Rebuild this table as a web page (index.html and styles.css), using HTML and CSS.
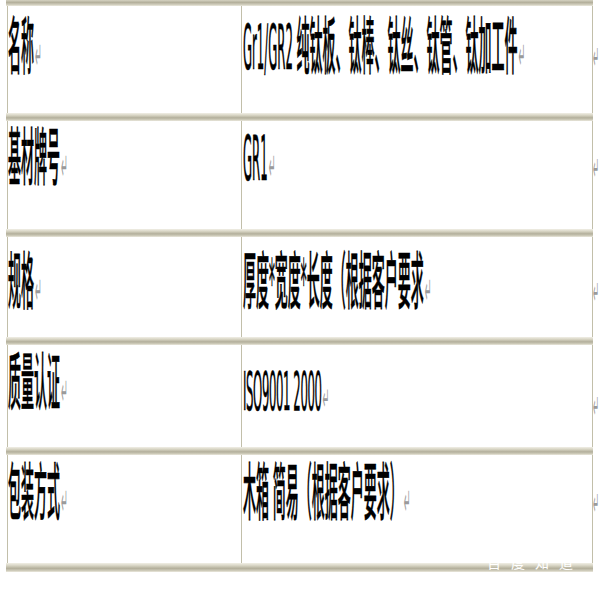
FILE: index.html
```html
<!DOCTYPE html>
<html lang="zh">
<head>
<meta charset="utf-8">
<title>钛材参数</title>
<link rel="stylesheet" href="styles.css">
</head>
<body>
<div class="sheet">
  <div class="rule first"></div>
  <div class="row r1">
    <div class="cell key"><span class="t">名称<span class="pm">↵</span></span></div>
    <div class="cell val"><span class="t">Gr1/GR2 纯钛板、钛棒、钛丝、钛管、钛加工件<span class="pm">↵</span></span></div>
    <div class="cell extra"><span class="t"><span class="pm">↵</span></span></div>
  </div>
  <div class="rule"></div>
  <div class="row r2">
    <div class="cell key"><span class="t">基材牌号<span class="pm">↵</span></span></div>
    <div class="cell val"><span class="t">GR1<span class="pm">↵</span></span></div>
    <div class="cell extra"><span class="t"><span class="pm">↵</span></span></div>
  </div>
  <div class="rule"></div>
  <div class="row r3">
    <div class="cell key"><span class="t">规格<span class="pm">↵</span></span></div>
    <div class="cell val"><span class="t">厚度*宽度*长度（根据客户要求<span class="pm">↵</span></span></div>
    <div class="cell extra"><span class="t"><span class="pm">↵</span></span></div>
  </div>
  <div class="rule"></div>
  <div class="row r4">
    <div class="cell key"><span class="t">质量认证<span class="pm">↵</span></span></div>
    <div class="cell val"><span class="t latin">ISO9001 2000<span class="pm">↵</span></span></div>
    <div class="cell extra"><span class="t"><span class="pm">↵</span></span></div>
  </div>
  <div class="rule"></div>
  <div class="row r5">
    <div class="cell key"><span class="t">包装方式<span class="pm">↵</span></span></div>
    <div class="cell val"><span class="t">木箱 简易（根据客户要求）<span class="pm">↵</span></span></div>
    <div class="cell extra"><span class="t"><span class="pm">↵</span></span></div>
  </div>
  <div class="rule last"></div>
  <div class="watermark">百度知道</div>
</div>
</body>
</html>
```

FILE: styles.css
```css
html, body {
  margin: 0;
  padding: 0;
  background: #ffffff;
  overflow: hidden;
}

.sheet {
  position: relative;
  width: 600px;
  margin-left: 7px;
}

.rule {
  width: 587px;
  margin-left: -1px;
  height: 8px;
  background: linear-gradient(#f1efe6 0%, #d6d3c2 30%, #b3af9b 60%, #cfccbb 85%, #ebe9de 100%);
}

.rule.first {
  height: 6px;
  background: linear-gradient(#d6d3c2 0%, #b3af9b 40%, #cfccbb 75%, #ebe9de 100%);
}

.rule.last {
  height: 9px;
}

.row {
  display: grid;
  grid-template-columns: 234px 352px 7px;
  box-sizing: border-box;
}

.r1 { height: 107px; }
.r2 { height: 108px; }
.r3 { height: 100px; }
.r4 { height: 102px; }
.r5 { height: 108px; }

.cell {
  box-sizing: border-box;
  overflow: hidden;
}

.key {
  border-left: 1px solid #c2bfaa;
}

.val {
  border-left: 1px solid #c2bfaa;
  border-right: 1px solid #c2bfaa;
  padding-left: 1px;
}

.extra {
  padding-left: 0;
}

.extra .pm {
  margin-left: 0;
  font-size: 7px;
}

.r1 .cell { padding-top: 7px; }
.r2 .cell { padding-top: 3px; }
.r3 .cell { padding-top: 11px; }
.r4 .cell { padding-top: 17px; }
.r4 .key { padding-top: 4px; }
.r5 .cell { padding-top: 4px; }

.t {
  display: inline-block;
  font-family: "DejaVu Sans Condensed", "Noto Sans CJK SC", sans-serif;
  font-weight: 500;
  font-size: 13px;
  line-height: 13px;
  color: #000000;
  white-space: nowrap;
  transform: scaleY(4.8);
  transform-origin: top left;
  -webkit-text-stroke: 0.15px #000;
}

.t.latin {
  transform: scaleY(4.1);
  letter-spacing: -0.4px;
}

.pm {
  font-family: "DejaVu Sans", sans-serif;
  font-weight: 400;
  font-size: 8px;
  color: #9a9a9a;
  margin-left: 1px;
  -webkit-text-stroke: 0;
}

.watermark {
  position: absolute;
  left: 480px;
  top: 555px;
  font-family: "Noto Sans CJK SC", sans-serif;
  font-size: 14px;
  line-height: 14px;
  letter-spacing: 10px;
  color: #ffffff;
}
```
